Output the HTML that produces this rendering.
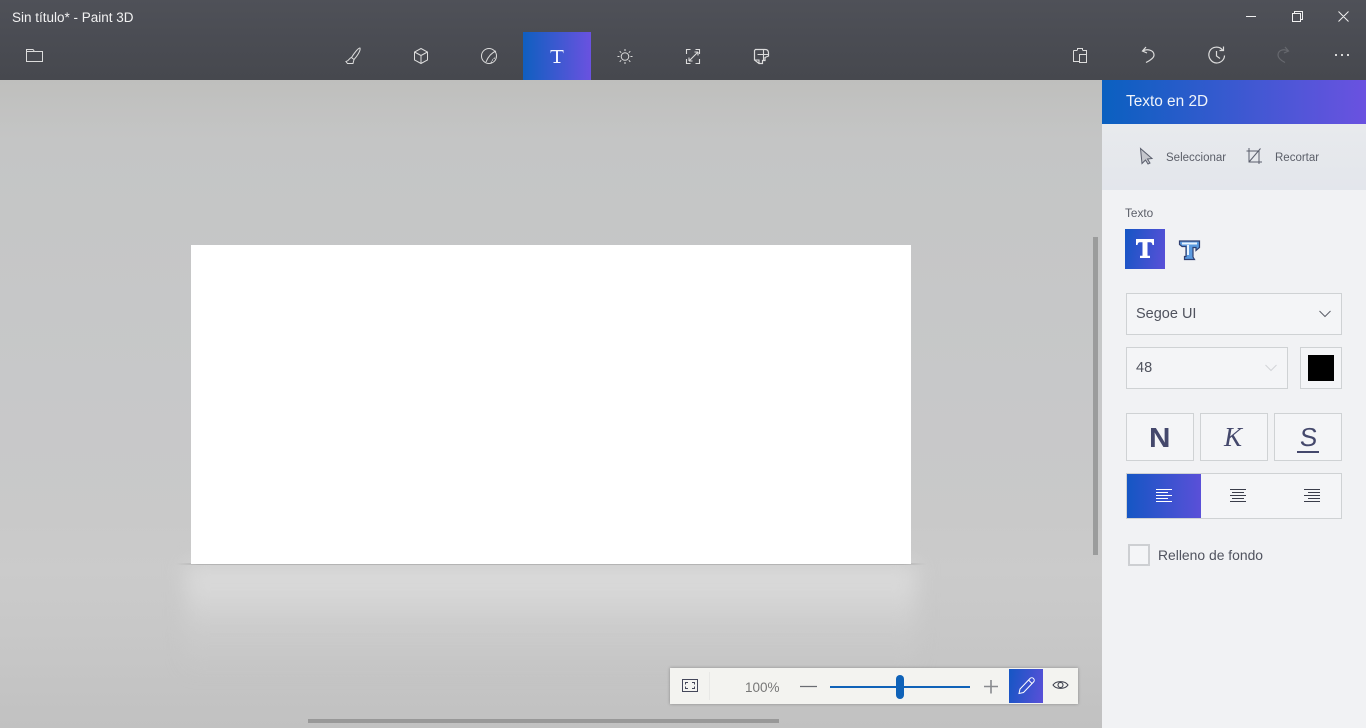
<!DOCTYPE html>
<html lang="es"><head><meta charset="utf-8"><title>Sin título* - Paint 3D</title>
<style>
html,body{margin:0;padding:0;width:1366px;height:728px;overflow:hidden;background:#c4c4c4}
body{position:relative;font-family:"Liberation Sans",sans-serif}
.a{position:absolute}
.t{position:absolute;white-space:nowrap;line-height:1}
svg{position:absolute;overflow:visible;fill:none}
.box{position:absolute;box-sizing:border-box;border:1px solid #cfd2d4;background:#f4f5f7}
.grad{background:linear-gradient(90deg,#0f5fc0,#6a52e0)}
</style></head><body>
<div class="a" style="left:0;top:80px;width:1102px;height:648px;overflow:hidden;background:linear-gradient(180deg,#bfbfbd 0,#c4c5c5 60px,#c7c8c9 300px,#c9c9c9 440px,#cbcbcb 490px,#c8c8c8 550px,#c1c1c1 648px)">
<div class="a" style="left:186px;top:484px;width:730px;height:110px;filter:blur(10px);background:linear-gradient(180deg,#dadada 0,#d8d8d8 25px,rgba(205,205,205,.6) 65px,rgba(200,200,200,0) 110px)"></div>
</div>
<div class="a" style="left:176px;top:563px;width:750px;height:2px;background:linear-gradient(90deg,rgba(175,175,175,0),#b4b4b4 3%,#b4b4b4 97%,rgba(175,175,175,0))"></div>
<div class="a" style="left:191px;top:245px;width:720px;height:319px;background:#fff"></div>
<div class="a" style="left:0;top:0;width:1366px;height:80px;background:linear-gradient(180deg,#4f5158 0,#4a4c53 40px,#46484e 80px)"></div>
<div class="t" style="left:12px;top:11px;font-size:13.500px;color:#f2f2f2">Sin título* - Paint 3D</div>
<svg style="left:0;top:0" width="1366" height="80" stroke="#dcdcdc" stroke-width="1">
<path d="M26.500 61.500V49.500H33L34.500 51.500H42.500V61.500Z"/>
<path d="M26.500 51.500H34"/>
<path d="M360 48C358.500 47.500 353.500 54 351.500 57.500L354 59.500C356.500 57 361 50.500 360 48Z"/>
<path d="M351.500 57.500C349 58 349.500 60.500 346 61.500L347.500 63.500H353L354 59.500"/>
<path d="M421 48.500L427.500 52V60L421 63.500L414.500 60V52Z"/>
<path d="M414.500 52L421 55.500L427.500 52M421 55.500V63.500"/>
<circle cx="489" cy="56" r="7.500"/>
<path d="M486 62C488 57 491 53 496 51"/>
<path d="M491 63C492 60 494 58 496.500 57" stroke-dasharray="1.500 1"/>
<circle cx="625" cy="56.500" r="3.800"/>
<path d="M625 49V51M625 62V64M617.500 56.500H619.500M630.500 56.500H632.500M619.700 51.200L621.200 52.700M628.800 60.300L630.300 61.800M630.300 51.200L628.800 52.700M621.200 60.300L619.700 61.800"/>
<path d="M686.500 54V49.500H690.500M695.500 49.500H699.500V54M686.500 59V63.500H690.500M695.500 63.500H699.500V59M689 61L698 52M698 52H694.500M698 52V55.500M689 61H692.500M689 61V57.500" stroke-width="1.100"/>
<path d="M755.500 49.500H765C767.500 49.500 768.500 51 768.500 53V56L765 57.500V60.500L762.500 60.500V63.500H759L754.500 60V50.500Z" stroke-width="1.200"/>
<path d="M763.500 49.500V54.500H768M757.500 54.500H763.500V60.500M754.500 60H759V63.500" stroke-width="1.100"/>
<path d="M1073.500 50.500V61.500H1079M1073.500 50.500H1077M1083 50.500H1086.500V54M1077.500 50.500V48.500H1082.500V50.500" />
<path d="M1079.500 54.500H1086.500V62.500H1079.500Z"/>
<path d="M1146 47L1142.500 51L1147 53M1143 51C1147 48.500 1154 50 1154 55C1154 58 1150 60.500 1146 62.500" stroke-width="1.200"/>
<path d="M1222.500 50C1219.500 46 1212 46 1209.500 51.500C1207 57.500 1212 63 1216.500 63C1221 63 1224.500 59.500 1224.500 55.500M1223.500 46.500V50.500H1219.500M1216.500 51V56L1220 58.500" stroke-width="1.200"/>
<g stroke="#66686e" stroke-width="1.200"><path d="M1285 47L1288.500 51L1284 53M1288 51C1284 48.500 1278 50 1278 55C1278 58 1281 60.500 1285 62.500"/></g>
<path d="M1246 16.500H1256M1292.500 13.500H1300.500V21.500H1292.500ZM1294.500 13.500V11.500H1302.500V19.500H1300.500M1338.500 11.500L1348.500 21.500M1348.500 11.500L1338.500 21.500" stroke="#f0f0f0"/>
</svg>
<div class="a" style="left:1335px;top:54px;width:2px;height:2px;background:#d8d8d8;box-shadow:6px 0 #d8d8d8,12px 0 #d8d8d8"></div>
<div class="a grad" style="left:523px;top:32px;width:68px;height:48px;z-index:0"></div>
<svg style="left:0;top:0;z-index:1" width="600" height="80"><path d="M550.500 53.500V50H563.500V53.500L562.500 51.200H558V62H560.500V63H553.500V62H556V51.200H551.500Z" fill="#f4f6ff"/></svg>

<div class="a" style="left:1093px;top:237px;width:5px;height:318px;background:#9b9c9c"></div>
<div class="a" style="left:308px;top:719px;width:471px;height:4px;background:#989898"></div>

<div class="a" style="left:1102px;top:80px;width:264px;height:648px;background:#f1f2f4"></div>
<div class="a grad" style="left:1102px;top:80px;width:264px;height:44px;background:linear-gradient(90deg,#0a60c0,#6a52e0)"></div>
<div class="t" style="left:1126px;top:94px;font-size:15.400px;color:#f0f4fa">Texto en 2D</div>
<div class="a" style="left:1102px;top:124px;width:264px;height:66px;background:linear-gradient(180deg,#e8eaed,#e3e6ec)"></div>
<svg style="left:1102px;top:124px" width="264" height="70" stroke="#5a5e6c">
<path d="M38.500 24.500L50 34.500L45.500 35L48 39L46 40L43.500 36L40 39.500Z" fill="#c4c6cc"/>
<path d="M144.500 27H157V40M147 24V38H160M147 38L158.500 24.500" stroke-width="1"/>
</svg>
<div class="t" style="left:1166px;top:153px;font-size:11.500px;color:#5b5e68">Seleccionar</div>
<div class="t" style="left:1275px;top:153px;font-size:11.500px;color:#5b5e68">Recortar</div>
<div class="t" style="left:1125px;top:208px;font-size:11.800px;color:#5b5e68">Texto</div>
<div class="a grad" style="left:1125px;top:229px;width:40px;height:40px;background:linear-gradient(100deg,#1556c4,#5a50d8)"></div>
<svg style="left:1125px;top:229px" width="40" height="40"><path d="M11 10H29V16H27.500C27.200 14 26.500 13.200 25 13.200H22.500V26.800H25V29H15V26.800H17.500V13.200H15C13.500 13.200 12.800 14 12.500 16H11Z" fill="#fff"/></svg>
<svg style="left:1178px;top:238px" width="24" height="24"><path d="M1.500 3H21.500V9.500L18 12.500V9.500H15V19L16.500 21.500H6.500V18.500H8V8.500H4L1.500 6.500Z" fill="#5a9ae0" stroke="#2f3f70" stroke-width="1.200"/><path d="M4 5.500H19M10 7V17" stroke="#e8f2fc" stroke-width="2"/></svg>

<div class="box" style="left:1126px;top:293px;width:216px;height:42px"></div>
<div class="t" style="left:1136px;top:307px;font-size:14.500px;color:#50535e">Segoe UI</div>
<svg style="left:1319px;top:310px" width="12" height="8"><path d="M.5 1L6 6.500L11.500 1" stroke="#5b5e68"/></svg>
<div class="box" style="left:1126px;top:347px;width:162px;height:42px"></div>
<div class="t" style="left:1136px;top:361px;font-size:14.500px;color:#50535e">48</div>
<svg style="left:1265px;top:364px" width="12" height="8"><path d="M.5 1L6 6.500L11.500 1" stroke="#d2d4d8"/></svg>
<div class="box" style="left:1300px;top:347px;width:42px;height:42px"></div>
<div class="a" style="left:1308px;top:355px;width:26px;height:26px;background:#000"></div>

<div class="box" style="left:1126px;top:413px;width:68px;height:48px"></div>
<div class="box" style="left:1200px;top:413px;width:68px;height:48px"></div>
<div class="box" style="left:1274px;top:413px;width:68px;height:48px"></div>
<div class="t" style="left:1149px;top:424px;font-size:28px;font-weight:bold;color:#44486c;transform-origin:left;transform:scaleX(1.06)">N</div>
<div class="t" style="left:1224px;top:424px;font-size:27px;font-family:'Liberation Serif',serif;font-style:italic;color:#44486c">K</div>
<div class="t" style="left:1300px;top:424px;font-size:26px;color:#44486c;transform:skewX(-5deg)">S</div>
<div class="a" style="left:1297px;top:451px;width:22px;height:2px;background:#44486c"></div>

<div class="box" style="left:1126px;top:473px;width:216px;height:46px"></div>
<div class="a grad" style="left:1127px;top:474px;width:74px;height:44px;background:linear-gradient(90deg,#1556c4,#5a50d8)"></div>
<svg style="left:1150px;top:488px" width="190" height="16" stroke-width="1">
<path d="M6 1.500H22M6 4.500H18M6 7.500H22M6 10.500H18M6 13.500H22" stroke="#fff"/>
<path d="M80 1.500H96M82 4.500H94M80 7.500H96M82 10.500H94M80 13.500H96" stroke="#3a3d4a"/>
<path d="M154 1.500H170M158 4.500H170M154 7.500H170M158 10.500H170M154 13.500H170" stroke="#3a3d4a"/>
</svg>
<div class="a" style="left:1128px;top:544px;width:22px;height:22px;box-sizing:border-box;border:2px solid #cdcfd2;background:#f4f5f7"></div>
<div class="t" style="left:1158px;top:549px;font-size:13.900px;color:#50535e">Relleno de fondo</div>

<div class="a" style="left:670px;top:668px;width:408px;height:36px;background:#f3f3f0;box-shadow:0 0 3px rgba(0,0,0,.3)"></div>
<div class="a" style="left:709px;top:672px;width:1px;height:28px;background:#e8e8e6"></div>
<svg style="left:670px;top:668px" width="408" height="36" stroke="#44475a">
<path d="M12.500 11.500H27.500V23.500H12.500Z"/><path d="M15.500 16.500V14.500H18M22 14.500H24.500V16.500M15.500 18.500V20.500H18M22 20.500H24.500V18.500"/>
<path d="M130 18.500H147" stroke="#6a6c72" stroke-width="1.300"/>
<path d="M160 19H300" stroke="#0f62b8" stroke-width="2"/>
<path d="M314 18.500H328M321 12V25.500" stroke="#888a8e" stroke-width="1.600"/>
</svg>
<div class="a" style="left:896px;top:675px;width:8px;height:24px;border-radius:4px;background:#0f62b8"></div>
<div class="t" style="left:745px;top:681px;font-size:13.500px;color:#777">100%</div>
<div class="a" style="left:1009px;top:669px;width:34px;height:34px;background:linear-gradient(100deg,#1556c4,#5a50d8)"></div>
<svg style="left:1009px;top:669px" width="34" height="34" stroke="#fff"><path d="M10 24.500L11 20L21 9.500C22 8.500 23.500 8.500 24.500 9.500C25.500 10.500 25.500 12 24.500 13L14.500 23.500Z"/><path d="M19.500 11L23 14.500"/></svg>
<svg style="left:1052px;top:678px" width="18" height="14" stroke="#3a3d4a" stroke-width="1.100"><path d="M1 7C4 2.500 13 2.500 16 7C13 11.500 4 11.500 1 7Z"/><circle cx="8.500" cy="7" r="2.500"/></svg>
</body></html>
